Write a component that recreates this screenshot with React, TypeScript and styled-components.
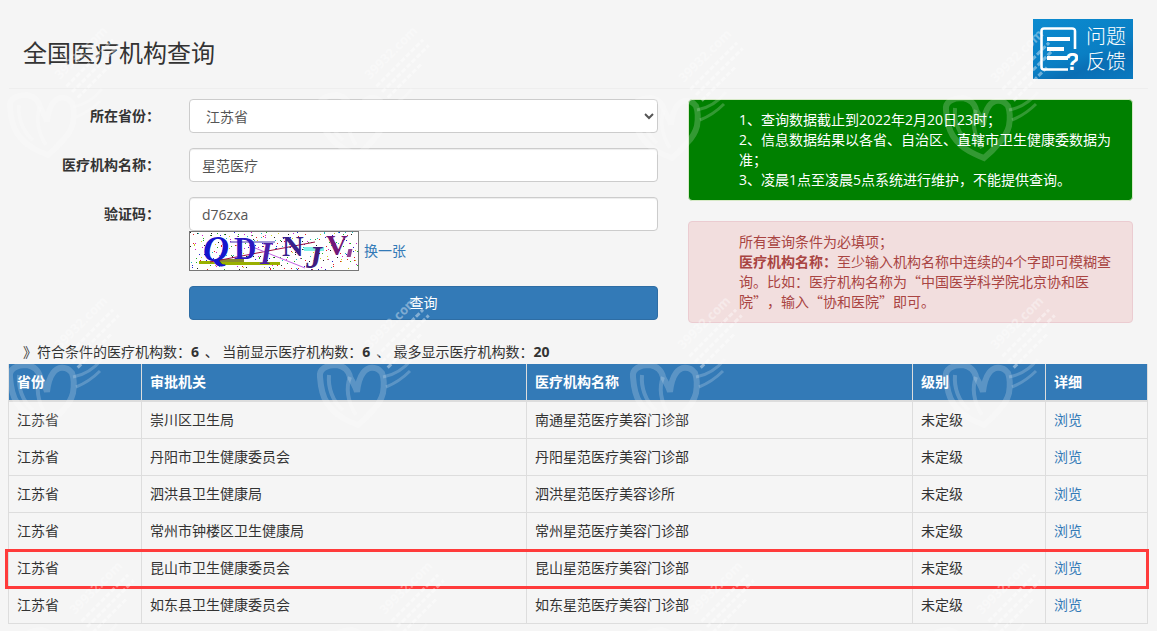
import React from "react";
import styled, { createGlobalStyle } from "styled-components";

const Global = createGlobalStyle`
  html, body { margin: 0; padding: 0; background: #f5f5f5; }
  body { font-family: "Open Sans", "Noto Sans CJK SC", sans-serif; font-size: 14px; line-height: 20px; color: #333; text-spacing-trim: space-all; }
  * { box-sizing: border-box; }
`;
const Page = styled.div`position: relative; width: 1157px; height: 631px; overflow: hidden; padding: 0 9px;`;
const Header = styled.header`
  display: flex; justify-content: space-between; align-items: flex-start;
  height: 89px; padding: 19px 15px 0 14px; border-bottom: 1px solid #eeeeee;
`;
const Title = styled.h1`margin: 17px 0 0; font-size: 24px; line-height: 34px; font-weight: 400; color: #333;`;
const Feedback = styled.div`
  width: 100px; height: 60px; display: flex; align-items: center; gap: 8px; padding: 0 0 0 7px;
  background: linear-gradient(160deg, #0b8bd0 0%, #0a7fc4 55%, #0a6eb4 72%, #0a7ac0 100%);
`;
const FeedbackText = styled.div`color: #fff; font-size: 20px; line-height: 25px; width: 41px; font-weight: 300; flex: none;`;
const Main = styled.div`display: flex; margin-top: 10px; height: 243px;`;
const Form = styled.form`width: 649px; display: flex; flex-direction: column;`;
const Field = styled.div`display: flex; margin-bottom: 15px;`;
const Label = styled.label`width: 151px; text-align: right; font-weight: 700; padding-top: 7px; line-height: 20px; flex: none;`;
const Control = styled.div`margin-left: 29px; width: 469px; flex: none;`;
const Input = styled.input`
  display: block; width: 100%; height: 34px; padding: 6px 12px; font: inherit; color: #555;
  background: #fff; border: 1px solid #ccc; border-radius: 4px; box-shadow: inset 0 1px 1px rgba(0,0,0,.075);
`;
const Select = styled.select`
  display: block; width: 100%; height: 34px; padding: 6px 12px; font: inherit; color: #555;
  background: #fff; border: 1px solid #ccc; border-radius: 4px;
`;
const CaptchaRow = styled.div`display: flex; align-items: center; height: 40px;`;
const CaptchaFrame = styled.div`width: 170px; height: 40px; border: 1px solid #777; background: #fff; line-height: 0;`;
const Link = styled.a`color: #337ab7; text-decoration: none;`;
const ChangeLink = styled(Link)`margin-left: 5px;`;
const Submit = styled.button`
  display: block; width: 469px; height: 34px; margin: 0 0 0 180px; font: inherit; color: #fff; border: 1px solid #2e6da4;
  background: #337ab7; border-radius: 4px;
`;
const Notes = styled.aside`width: 445px; margin-left: 30px; display: flex; flex-direction: column; gap: 20px;`;
const Note = styled.div<{ $kind: "green" | "pink" }>`
  padding: 10px 20px 10px 50px; border-radius: 4px; border: 1px solid ${p => p.$kind === "green" ? "#d6e9c6" : "#ebccd1"};
  background: ${p => p.$kind === "green" ? "#008000" : "#f2dede"};
  color: ${p => p.$kind === "green" ? "#fff" : "#a94442"};
`;
const Quote = styled.span`font-family: "Noto Sans CJK SC", sans-serif; line-height: 1;`;
const Summary = styled.p`margin: 0; padding-left: 14px; height: 20px; white-space: pre;`;
const Count = styled.b`margin-right: 2px;`;
const Table = styled.table`
  width: 1139px; margin-left: -1px; table-layout: fixed; border-collapse: collapse; background: transparent;
`;
const Th = styled.th`
  height: 37px; padding: 0 8px; text-align: left; font-weight: 700; color: #fff; background: #337ab7;
  border: 1px solid #ddd; border-top: 0; border-bottom: 2px solid #ddd;
`;
const Td = styled.td`height: 37px; padding: 0 8px; border: 1px solid #ddd; vertical-align: middle;`;
const TableWrap = styled.div`position: relative; margin-top: 2px;`;
const Highlight = styled.div`
  position: absolute; left: -4px; top: 185px; width: 1144px; height: 40px; border: 3px solid #ff3b3b; pointer-events: none;
`;
const Overlay = styled.svg`position: absolute; inset: 0; pointer-events: none;`;

const Mark = ({ x, y }: { x: number; y: number }) => (
  <g transform={`translate(${x} ${y})`} fill="none" stroke="#fff" strokeOpacity={0.2}>
    <path strokeWidth="6" d="M-30 -18 C-31 -26 -24 -30 -13 -30 C-6 -29 -1 -24 0 -18 C3 -12 6 -8 7 -3 C8 -12 10 -18 13 -22 C17 -28 26 -30 32 -22 C35 -14 34 -8 33 -2 C31 6 27 11 23 15 C18 21 13 26 8 30 C3 28 -2 26 -7 23 C-14 19 -19 14 -23 8 C-27 2 -29 -4 -30 -18 Z" />
    <path strokeWidth="4" d="M-21 -20 C-22 -8 -18 6 -7 15 M0 -18 C-4 -8 -3 6 6 20" />
    <path strokeWidth="3" d="M33 -18 C44 -20 54 -26 62 -36 M36 -8 C46 -12 54 -18 60 -24" />
    <g transform="translate(20 -45) rotate(-45)">
      <text x="0" y="0" fontSize="13" fontWeight="700" fill="#fff" fillOpacity={0.38} stroke="none" fontFamily="Open Sans, sans-serif">39932.com</text>
      <path d="M0 9 H66 M0 17 H66 M0 25 H48" stroke="#fff" strokeOpacity={0.4} strokeWidth="3" strokeDasharray="5 2" />
    </g>
  </g>
);
const marks: [number, number][] = [
  [40, 125], [350, 125], [664, 128], [976, 128],
  [40, 395], [350, 395], [663, 395], [976, 395],
  [55, 660], [365, 660], [675, 660], [962, 660],
];

const dots = Array.from({ length: 300 }, (_, i) => {
  const x = (i * 73) % 168, y = (i * 41 + (i * i) % 17) % 38;
  const c = ["#222", "#d22", "#2a2", "#22c", "#c2c", "#2bb", "#cc2"][i % 7];
  return <rect key={i} x={x} y={y} width="1" height="1" fill={c} />;
});
const Captcha = () => (
  <svg width="168" height="38" viewBox="0 0 168 38">
    {dots}
    <rect x="9" y="29" width="22" height="3" fill="#9ab000" />
    <rect x="30" y="30" width="60" height="3" fill="#9ab000" />
    <rect x="28" y="27" width="26" height="3" fill="#8a8a30" />
    <path d="M20 30 L125 10" stroke="#a01040" strokeWidth="1" fill="none" />
    <path d="M60 14 L115 36" stroke="#c060e0" strokeWidth="1" fill="none" />
    <path d="M40 10 L85 10" stroke="#4030b0" strokeWidth="1" fill="none" />
    <rect x="114" y="15" width="20" height="4" fill="#80f0e8" />
    <g fontFamily="Liberation Serif, serif" fontWeight="700">
      <text x="13" y="29" fontSize="36" fontStyle="italic" fill="#1515cc">Q</text>
      <text x="44" y="27" fontSize="31" fill="#2a18c0">D</text>
      <text x="70" y="32" fontSize="31" fontStyle="italic" fill="#4a20a8">I</text>
      <text x="92" y="24" fontSize="30" fill="#38208c">N</text>
      <text x="116" y="36" fontSize="32" fontStyle="italic" fill="#401c80">J</text>
      <text x="136" y="23" fontSize="30" fill="#701878">V</text>
      <rect x="158" y="17" width="4" height="8" fill="#904090" transform="skewX(-12) translate(4 0)" />
    </g>
  </svg>
);

const rows = [
  ["崇川区卫生局", "南通星范医疗美容门诊部"],
  ["丹阳市卫生健康委员会", "丹阳星范医疗美容门诊部"],
  ["泗洪县卫生健康局", "泗洪星范医疗美容诊所"],
  ["常州市钟楼区卫生健康局", "常州星范医疗美容门诊部"],
  ["昆山市卫生健康委员会", "昆山星范医疗美容门诊部"],
  ["如东县卫生健康委员会", "如东星范医疗美容门诊部"],
];

export default function App() {
  return (
    <Page>
      <Global />
      <Header>
        <Title>全国医疗机构查询</Title>
        <Feedback>
          <svg width="38" height="44" viewBox="0 0 38 44" fill="none" stroke="#fff">
            <path d="M35 22 V4 Q35 1.5 32 1.5 H4 Q1.5 1.5 1.5 4 V40 Q1.5 42.5 4 42.5 H28" strokeWidth="2.6" />
            <path d="M7 12 H30 M7 22 H24 M7 31 H28" strokeWidth="4" />
            <text x="25" y="43" fontSize="24" fontWeight="700" fill="#fff" stroke="none" fontFamily="Liberation Sans, sans-serif">?</text>
          </svg>
          <FeedbackText>问题<br />反馈</FeedbackText>
        </Feedback>
      </Header>
      <Main>
        <Form>
          <Field>
            <Label>所在省份：</Label>
            <Control>
              <Select defaultValue="江苏省"><option>江苏省</option></Select>
            </Control>
          </Field>
          <Field>
            <Label>医疗机构名称：</Label>
            <Control><Input defaultValue="星范医疗" /></Control>
          </Field>
          <Field>
            <Label>验证码：</Label>
            <Control>
              <Input defaultValue="d76zxa" />
              <CaptchaRow>
                <CaptchaFrame><Captcha /></CaptchaFrame>
                <ChangeLink>换一张</ChangeLink>
              </CaptchaRow>
            </Control>
          </Field>
          <Submit type="button">查询</Submit>
        </Form>
        <Notes>
          <Note $kind="green">
            1、查询数据截止到2022年2月20日23时；<br />
            2、信息数据结果以各省、自治区、直辖市卫生健康委数据为准；<br />
            3、凌晨1点至凌晨5点系统进行维护，不能提供查询。
          </Note>
          <Note $kind="pink">
            所有查询条件为必填项；<br />
            <b>医疗机构名称：</b>至少输入机构名称中连续的4个字即可模糊查询。比如：医疗机构名称为<Quote>“</Quote>中国医学科学院北京协和医院<Quote>”</Quote>，输入<Quote>“</Quote>协和医院<Quote>”</Quote>即可。
          </Note>
        </Notes>
      </Main>
      <Summary>》符合条件的医疗机构数：<Count>6</Count> 、 当前显示医疗机构数：<Count>6</Count> 、 最多显示医疗机构数：<b>20</b></Summary>
      <TableWrap>
        <Table>
          <colgroup>
            <col style={{ width: 133 }} /><col style={{ width: 385 }} /><col style={{ width: 386 }} /><col style={{ width: 133 }} /><col style={{ width: 102 }} />
          </colgroup>
          <thead>
            <tr><Th>省份</Th><Th>审批机关</Th><Th>医疗机构名称</Th><Th>级别</Th><Th>详细</Th></tr>
          </thead>
          <tbody>
            {rows.map(r => (
              <tr key={r[1]}>
                <Td>江苏省</Td><Td>{r[0]}</Td><Td>{r[1]}</Td><Td>未定级</Td><Td><Link>浏览</Link></Td>
              </tr>
            ))}
          </tbody>
        </Table>
        <Highlight />
      </TableWrap>
      <Overlay width="1157" height="631">
        {marks.map(([x, y], i) => <Mark key={i} x={x} y={y} />)}
      </Overlay>
    </Page>
  );
}
